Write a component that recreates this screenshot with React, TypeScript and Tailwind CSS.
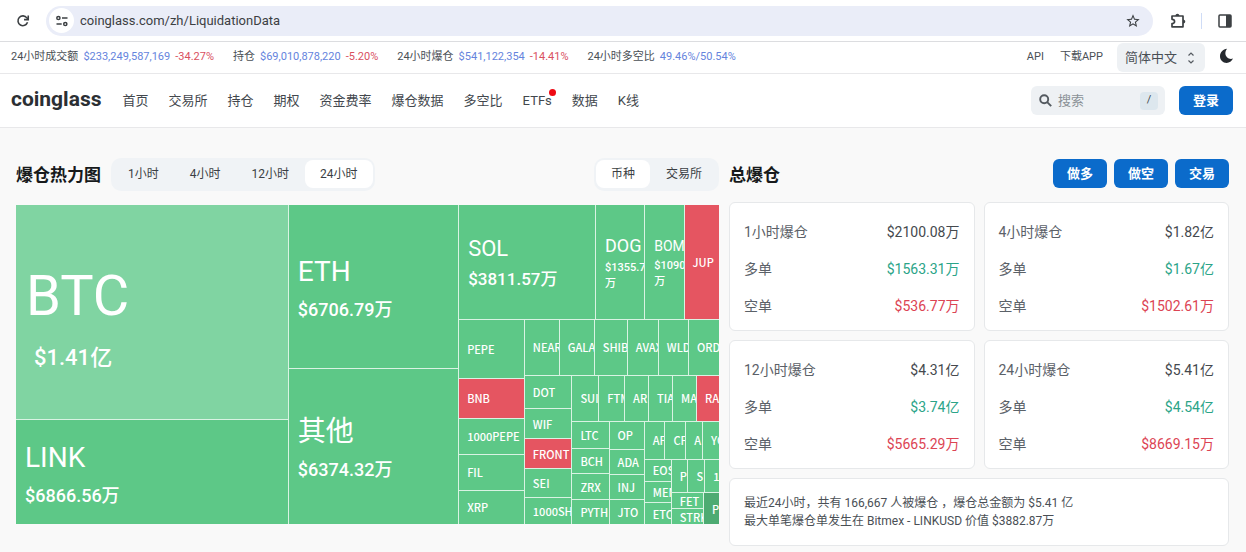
import { useState } from "react";
import clsx from "clsx";

type Leaf = {
    name: string;
    size: number;
    value?: string;
    scale?: "xl" | "lg" | "md" | "sm" | "xs";
    tone?: "light" | "red" | "dark";
};

type Group = { size: number; dir: "row" | "col"; items: TreeNode[] };
type TreeNode = Leaf | Group;

const coins: Group = {
    size: 1,
    dir: "row",
    items: [
        {
            size: 273,
            dir: "col",
            items: [
                { name: "BTC", size: 215, value: "$1.41亿", scale: "xl", tone: "light" },
                { name: "LINK", size: 105, value: "$6866.56万", scale: "lg" },
            ],
        },
        {
            size: 170,
            dir: "col",
            items: [
                { name: "ETH", size: 164, value: "$6706.79万", scale: "lg" },
                { name: "其他", size: 156, value: "$6374.32万", scale: "lg" },
            ],
        },
        {
            size: 261,
            dir: "col",
            items: [
                {
                    size: 115,
                    dir: "row",
                    items: [
                        { name: "SOL", size: 138, value: "$3811.57万", scale: "md" },
                        { name: "DOG", size: 49, value: "$1355.7万", scale: "sm" },
                        { name: "BOM", size: 39, value: "$1090万", scale: "xs" },
                        { name: "JUP", size: 35, tone: "red" },
                    ],
                },
                {
                    size: 205,
                    dir: "row",
                    items: [
                        {
                            size: 65,
                            dir: "col",
                            items: [
                                { name: "PEPE", size: 59 },
                                { name: "BNB", size: 40, tone: "red" },
                                { name: "1000PEPE", size: 36 },
                                { name: "FIL", size: 36 },
                                { name: "XRP", size: 34 },
                            ],
                        },
                        {
                            size: 195,
                            dir: "col",
                            items: [
                                {
                                    size: 55,
                                    dir: "row",
                                    items: [
                                        { name: "NEAR", size: 35 },
                                        { name: "GALA", size: 35 },
                                        { name: "SHIB", size: 33 },
                                        { name: "AVAX", size: 31 },
                                        { name: "WLD", size: 30 },
                                        { name: "ORD", size: 31 },
                                    ],
                                },
                                {
                                    size: 150,
                                    dir: "row",
                                    items: [
                                        {
                                            size: 47,
                                            dir: "col",
                                            items: [
                                                { name: "DOT", size: 34 },
                                                { name: "WIF", size: 30 },
                                                { name: "FRONT", size: 30, tone: "red" },
                                                { name: "SEI", size: 29 },
                                                { name: "1000SHI", size: 27 },
                                            ],
                                        },
                                        {
                                            size: 148,
                                            dir: "col",
                                            items: [
                                                {
                                                    size: 46,
                                                    dir: "row",
                                                    items: [
                                                        { name: "SUI", size: 27 },
                                                        { name: "FTM", size: 26 },
                                                        { name: "ARB", size: 24 },
                                                        { name: "TIA", size: 24 },
                                                        { name: "MA", size: 24 },
                                                        { name: "RA", size: 23, tone: "red" },
                                                    ],
                                                },
                                                {
                                                    size: 104,
                                                    dir: "row",
                                                    items: [
                                                        {
                                                            size: 37,
                                                            dir: "col",
                                                            items: [
                                                                { name: "LTC", size: 27 },
                                                                { name: "BCH", size: 26 },
                                                                { name: "ZRX", size: 26 },
                                                                { name: "PYTH", size: 25 },
                                                            ],
                                                        },
                                                        {
                                                            size: 35,
                                                            dir: "col",
                                                            items: [
                                                                { name: "OP", size: 28 },
                                                                { name: "ADA", size: 26 },
                                                                { name: "INJ", size: 25 },
                                                                { name: "JTO", size: 25 },
                                                            ],
                                                        },
                                                        {
                                                            size: 76,
                                                            dir: "col",
                                                            items: [
                                                                {
                                                                    size: 38,
                                                                    dir: "row",
                                                                    items: [
                                                                        { name: "AP", size: 21 },
                                                                        { name: "CF", size: 21 },
                                                                        { name: "A", size: 17 },
                                                                        { name: "YG", size: 17 },
                                                                    ],
                                                                },
                                                                {
                                                                    size: 66,
                                                                    dir: "row",
                                                                    items: [
                                                                        {
                                                                            size: 27,
                                                                            dir: "col",
                                                                            items: [
                                                                                { name: "EOS", size: 22 },
                                                                                { name: "MEM", size: 22 },
                                                                                { name: "ETC", size: 22 },
                                                                            ],
                                                                        },
                                                                        {
                                                                            size: 49,
                                                                            dir: "col",
                                                                            items: [
                                                                                {
                                                                                    size: 34,
                                                                                    dir: "row",
                                                                                    items: [
                                                                                        { name: "P", size: 17 },
                                                                                        { name: "S", size: 17 },
                                                                                        { name: "1", size: 15 },
                                                                                    ],
                                                                                },
                                                                                {
                                                                                    size: 32,
                                                                                    dir: "row",
                                                                                    items: [
                                                                                        {
                                                                                            size: 33,
                                                                                            dir: "col",
                                                                                            items: [
                                                                                                { name: "FET", size: 16 },
                                                                                                { name: "STRK", size: 16 },
                                                                                            ],
                                                                                        },
                                                                                        { name: "P", size: 16, tone: "dark" },
                                                                                    ],
                                                                                },
                                                                            ],
                                                                        },
                                                                    ],
                                                                },
                                                            ],
                                                        },
                                                    ],
                                                },
                                            ],
                                        },
                                    ],
                                },
                            ],
                        },
                    ],
                },
            ],
        },
    ],
};

const nameStyles = {
    xl: "text-[56px] leading-[80px]",
    lg: "text-[28px] leading-[42px]",
    md: "text-[22px] leading-[32px]",
    sm: "text-[18px] leading-[28px]",
    xs: "text-[14px] leading-[24px]",
};

const valueStyles = {
    xl: "pl-2 text-[22px] leading-[44px]",
    lg: "text-[18px] leading-[34px]",
    md: "text-[17px] leading-[28px]",
    sm: "text-[11px] leading-[16px]",
    xs: "text-[11px] leading-[16px]",
};

const padStyles = {
    xl: "pt-3 pl-[10px]",
    lg: "pt-[6px] pl-[9px]",
    md: "pt-[2px] pl-[9px]",
    sm: "pl-[9px]",
    xs: "pl-[9px]",
};

function Tile({ node }: { node: Leaf }) {
    const { name, value, scale, tone } = node;
    return (
        <div
            style={{ flexGrow: node.size }}
            className={clsx(
                "flex min-h-0 min-w-0 basis-0 items-center overflow-hidden text-white",
                tone === "light" && "bg-[#80d4a2]",
                tone === "red" && "bg-[#e55561]",
                tone === "dark" && "bg-[#4dab72]",
                !tone && "bg-[#5dc887]"
            )}
        >
            <div className={clsx("w-full", scale ? padStyles[scale] : "pl-2")}>
                <div
                    className={clsx(
                        "whitespace-nowrap",
                        scale
                            ? nameStyles[scale]
                            : "font-['Noto_Sans_CJK_SC',sans-serif] text-[11px] leading-[14px] font-medium"
                    )}
                >
                    {name}
                </div>
                {value && scale && (
                    <div className={clsx("font-medium", valueStyles[scale])}>
                        {value}
                    </div>
                )}
            </div>
        </div>
    );
}

function Treemap({ node }: { node: TreeNode }) {
    if (!("items" in node)) return <Tile node={node} />;
    return (
        <div
            style={{ flexGrow: node.size }}
            className={clsx(
                "flex min-h-0 min-w-0 basis-0 gap-px bg-[#d9f3e3]",
                node.dir === "col" ? "flex-col" : "flex-row"
            )}
        >
            {node.items.map((item, i) => (
                <Treemap key={i} node={item} />
            ))}
        </div>
    );
}

const stats = [
    { label: "24小时成交额", value: "$233,249,587,169", change: "-34.27%" },
    { label: "持仓", value: "$69,010,878,220", change: "-5.20%" },
    { label: "24小时爆仓", value: "$541,122,354", change: "-14.41%" },
    { label: "24小时多空比", value: "49.46%/50.54%" },
];

const links = ["首页", "交易所", "持仓", "期权", "资金费率", "爆仓数据", "多空比", "ETFs", "数据", "K线"];

const cards = [
    { title: "1小时爆仓", total: "$2100.08万", long: "$1563.31万", short: "$536.77万" },
    { title: "4小时爆仓", total: "$1.82亿", long: "$1.67亿", short: "$1502.61万" },
    { title: "12小时爆仓", total: "$4.31亿", long: "$3.74亿", short: "$5665.29万" },
    { title: "24小时爆仓", total: "$5.41亿", long: "$4.54亿", short: "$8669.15万" },
];

function BrowserBar() {
    return (
        <div className="flex h-[42px] items-center border-b border-[#dcdde0] bg-white pr-[14px] pl-4 text-[#3c4043]">
            <button aria-label="Reload">
                <svg width="14" height="14" viewBox="0 0 16 16" fill="none" stroke="currentColor" strokeWidth="1.8">
                    <path d="M13.2 9.5A5.6 5.6 0 1 1 12.4 4.4L13.6 5.8" />
                    <path d="M14 1.6v4.8H9.2" />
                </svg>
            </button>
            <div className="ml-4 flex h-[30px] flex-1 items-center rounded-full bg-[#eaedf8] pr-3 pl-[3px]">
                <button aria-label="Site information" className="flex h-[25px] w-[25px] items-center justify-center rounded-full bg-white">
                    <svg width="12" height="12" viewBox="0 0 12 12" fill="none" stroke="currentColor" strokeWidth="1.5">
                        <circle cx="2.4" cy="3" r="1.6" />
                        <path d="M6 3h5.5M.5 9h5.2" />
                        <circle cx="9.3" cy="9" r="1.6" />
                    </svg>
                </button>
                <input
                    aria-label="Address"
                    defaultValue="coinglass.com/zh/LiquidationData"
                    className="ml-[6px] min-w-0 flex-1 bg-transparent text-[13px] outline-none"
                />
                <button aria-label="Bookmark">
                    <svg width="16" height="16" viewBox="0 0 24 24" fill="currentColor">
                        <path d="M22 9.24l-7.19-.62L12 2 9.19 8.63 2 9.24l5.46 4.73L5.82 21 12 17.27 18.18 21l-1.63-7.03L22 9.24zM12 15.4l-3.76 2.27 1-4.28-3.32-2.88 4.38-.38L12 6.1l1.71 4.04 4.38.38-3.32 2.88 1 4.28L12 15.4z" />
                    </svg>
                </button>
            </div>
            <button aria-label="Extensions" className="ml-4">
                <svg width="18" height="18" viewBox="0 0 18 18" fill="none" stroke="currentColor" strokeWidth="1.7">
                    <path d="M3 4H14v10.8H3v-3.3c3.4-.2 3.4-4 0-4.2z" strokeLinejoin="round" />
                    <path d="M6.4 4c0-3 4-3 4 0zM14 7.4c3 0 3 4 0 4z" fill="currentColor" stroke="none" />
                </svg>
            </button>
            <span className="ml-[14px] h-4 w-px bg-[#cfdcf6]" />
            <button aria-label="Side panel" className="ml-4">
                <svg width="14" height="14" viewBox="0 0 14 14">
                    <rect x="1" y="1" width="12" height="12" rx="1" fill="none" stroke="currentColor" strokeWidth="1.5" />
                    <rect x="8" y="1" width="5" height="12" fill="currentColor" />
                </svg>
            </button>
        </div>
    );
}

function StatsBar() {
    return (
        <div className="flex h-8 items-center justify-between border-b border-[#e8e8ea] bg-white pr-3 pl-[11px] text-[11px] text-[#4a4f55]">
            <div className="flex gap-[19px]">
                {stats.map((s) => (
                    <div key={s.label} className="flex gap-[5px] whitespace-nowrap">
                        <span>{s.label}</span>
                        <span className="text-[#6584dd]">{s.value}</span>
                        {s.change && <span className="text-[#d9505f]">{s.change}</span>}
                    </div>
                ))}
            </div>
            <div className="flex items-center">
                <a href="#api">API</a>
                <a href="#app" className="ml-4">下载APP</a>
                <div className="relative ml-[14px]">
                    <select
                        aria-label="语言"
                        className="h-[29px] w-[88px] appearance-none rounded-md bg-[#eef1f4] pl-2 text-[13px] outline-none"
                    >
                        <option>简体中文</option>
                        <option>English</option>
                    </select>
                    <svg
                        className="pointer-events-none absolute top-2 right-[10px]"
                        width="8"
                        height="14"
                        viewBox="0 0 8 14"
                        fill="none"
                        stroke="#555b61"
                        strokeWidth="1.2"
                    >
                        <path d="M1.5 4.5L4 2l2.5 2.5M1.5 9.5L4 12l2.5-2.5" />
                    </svg>
                </div>
                <button aria-label="深色模式" className="mb-1 ml-[14px]">
                    <svg width="15" height="16" viewBox="0 0 15 16" fill="#25292e">
                        <path d="M8 .8C5.7 3.8 6 7.2 8 9.2c1.7 1.7 3.7 2 6 1.4C12.8 13.4 10.3 15 7.6 15 3.9 15 1 12.1 1 8.3 1 4.3 4 1.2 8 .8z" />
                    </svg>
                </button>
            </div>
        </div>
    );
}

function NavBar() {
    return (
        <header className="flex h-[54px] items-center justify-between border-b border-[#e8e8ea] bg-white pr-[13px] pl-[11px] text-[13px] text-[#42474d]">
            <div className="flex items-center">
                <a href="#home" className="pb-1 text-[21px] leading-6 font-bold text-[#2b2f33]">
                    coinglass
                </a>
                <nav className="ml-[21px] flex gap-5 whitespace-nowrap">
                    {links.map((link) => (
                        <a key={link} href={"#" + link} className="relative">
                            {link}
                            {link === "ETFs" && (
                                <span className="absolute -top-[2px] -right-1 h-[7px] w-[7px] rounded-full bg-[#ee0a14]" />
                            )}
                        </a>
                    ))}
                </nav>
            </div>
            <div className="flex items-center">
                <label className="flex h-[29px] w-[134px] items-center rounded-md bg-[#eef1f4] pr-[7px] pl-2">
                    <svg className="shrink-0" width="13" height="13" viewBox="0 0 13 13" fill="none" stroke="#545a60" strokeWidth="1.9">
                        <circle cx="5.2" cy="5.2" r="4" />
                        <path d="M8.2 8.2l4 4" />
                    </svg>
                    <input
                        aria-label="搜索"
                        placeholder="搜索"
                        className="ml-[6px] w-0 flex-1 bg-transparent outline-none placeholder:text-[#8b9197]"
                    />
                    <kbd className="flex h-[18px] w-[18px] items-center justify-center rounded-sm bg-[#dde7ee] font-[inherit] text-[11px]">/</kbd>
                </label>
                <button className="ml-[14px] h-[29px] w-[54px] rounded-md bg-[#0b6bcb] font-bold text-white">
                    登录
                </button>
            </div>
        </header>
    );
}

function Tabs({ items, initial }: { items: string[]; initial: string }) {
    const [active, setActive] = useState(initial);
    return (
        <div className="flex gap-px rounded-[10px] bg-[#f0f3f6] p-[2px] pb-[3px] text-[12px] text-[#3b3f44]">
            {items.map((item) => (
                <button
                    key={item}
                    onClick={() => setActive(item)}
                    className={clsx(
                        "h-7 rounded-lg px-[15px] whitespace-nowrap",
                        item === active && "bg-white"
                    )}
                >
                    {item}
                </button>
            ))}
        </div>
    );
}

function Card({ card }: { card: (typeof cards)[number] }) {
    const rows = [
        { label: card.title, value: card.total, color: "text-[#45494e]" },
        { label: "多单", value: card.long, color: "text-[#2ba488]" },
        { label: "空单", value: card.short, color: "text-[#dc4453]" },
    ];
    return (
        <div className="rounded-md border border-[#e6e8ea] bg-white px-[14px] pt-[11px] pb-[5px] text-[14px] text-[#5b6168]">
            {rows.map((row) => (
                <div key={row.label} className="flex h-[37px] items-center justify-between">
                    <span>{row.label}</span>
                    <span className={row.color}>{row.value}</span>
                </div>
            ))}
        </div>
    );
}

export default function App() {
    return (
        <div className="min-h-screen bg-[#f9f9f9] font-['Roboto','Noto_Sans_CJK_SC',sans-serif]">
            <BrowserBar />
            <StatsBar />
            <NavBar />
            <main className="grid grid-cols-[703fr_500fr] gap-[10px] pt-[30px] pr-[17px] pb-[7px] pl-4">
                <section className="min-w-0">
                    <div className="flex items-center justify-between">
                        <div className="flex items-center gap-[10px]">
                            <h2 className="pt-[2px] text-[17px] font-bold text-[#171a1c]">爆仓热力图</h2>
                            <Tabs items={["1小时", "4小时", "12小时", "24小时"]} initial="24小时" />
                        </div>
                        <Tabs items={["币种", "交易所"]} initial="币种" />
                    </div>
                    <div className="mt-[14px] flex h-[319px]">
                        <Treemap node={coins} />
                    </div>
                </section>
                <section className="min-w-0">
                    <div className="flex h-[33px] items-center justify-between">
                        <h2 className="pt-[2px] text-[17px] font-bold text-[#171a1c]">总爆仓</h2>
                        <div className="flex gap-[7px] pb-[2px]">
                            {["做多", "做空", "交易"].map((label) => (
                                <button
                                    key={label}
                                    className="h-[29px] w-[54px] rounded-md bg-[#0b6bcb] text-[13px] font-bold text-white"
                                >
                                    {label}
                                </button>
                            ))}
                        </div>
                    </div>
                    <div className="mt-[11px] grid grid-cols-2 gap-[9px]">
                        {cards.map((card) => (
                            <Card key={card.title} card={card} />
                        ))}
                        <div className="col-span-2 rounded-md border border-[#e6e8ea] bg-white px-[14px] py-[15px] text-[12px] leading-[18px] text-[#4a4f55]">
                            <p>最近24小时，共有 166,667 人被爆仓 ，爆仓总金额为 $5.41 亿</p>
                            <p>最大单笔爆仓单发生在 Bitmex - LINKUSD 价值 $3882.87万</p>
                        </div>
                    </div>
                </section>
            </main>
        </div>
    );
}
